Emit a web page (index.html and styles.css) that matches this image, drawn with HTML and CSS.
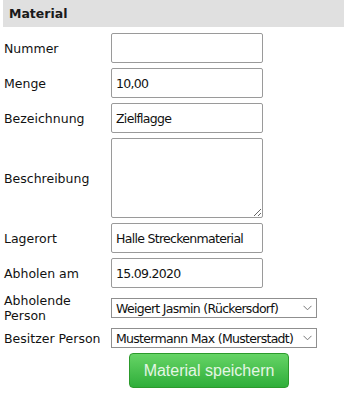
FILE: index.html
```html
<!DOCTYPE html>
<html>

<head>
    <link rel="stylesheet" href="styles.css">
</head>

<body>

    <div class="panel">
        <h2 class="panel-title">Material</h2>
        <form class="material-form" action="#" method="post">

            <label for="nummer">Nummer</label>
            <input type="text" id="nummer" name="nummer" value="">

            <label for="menge">Menge</label>
            <input type="text" id="menge" name="menge" value="10,00">

            <label for="bezeichnung">Bezeichnung</label>
            <input type="text" id="bezeichnung" name="bezeichnung" value="Zielflagge">

            <label for="beschreibung">Beschreibung</label>
            <textarea id="beschreibung" name="beschreibung"></textarea>

            <label for="lagerort" class="gap-top">Lagerort</label>
            <input type="text" id="lagerort" name="lagerort" class="gap-top" value="Halle Streckenmaterial">

            <label for="abholen">Abholen am</label>
            <input type="text" id="abholen" name="abholen" value="15.09.2020">

            <label for="abholer" class="two-lines">Abholende Person</label>
            <div class="select-wrap">
                <select id="abholer" name="abholer">
                    <option>Weigert Jasmin (Rückersdorf)</option>
                </select>
                <svg class="chevron" width="9" height="6" viewBox="0 0 9 6"><path d="M0.5 0.8 L4.5 4.8 L8.5 0.8" fill="none" stroke="#777" stroke-width="1"/></svg>
            </div>

            <label for="besitzer">Besitzer Person</label>
            <div class="select-wrap">
                <select id="besitzer" name="besitzer">
                    <option>Mustermann Max (Musterstadt)</option>
                </select>
                <svg class="chevron" width="9" height="6" viewBox="0 0 9 6"><path d="M0.5 0.8 L4.5 4.8 L8.5 0.8" fill="none" stroke="#777" stroke-width="1"/></svg>
            </div>

            <span></span>
            <button type="submit" class="btn-save">Material speichern</button>
        </form>
    </div>

</body>

</html>
```

FILE: styles.css
```css
body {
    margin: 0;
    font-family: "DejaVu Sans", sans-serif;
    font-size: 12.5px;
    color: #111;
    background-color: #fff;
}

.panel {
    margin-left: 3px;
}

.panel-title {
    margin: 0;
    height: 27px;
    line-height: 28px;
    padding-left: 6px;
    background-color: #e0e0e0;
    font-size: 12.5px;
    font-weight: bold;
    color: #1a1a1a;
}

.material-form {
    display: grid;
    grid-template-columns: 107px 1fr;
    row-gap: 5px;
    align-items: center;
    margin-top: 6px;
    padding-left: 1px;
}

label {
    line-height: 15px;
}

label.two-lines {
    width: 80px;
}

.gap-top {
    margin-top: 1px;
}

/* Eingabefelder etwas schmaler laufen lassen */
input[type="text"],
textarea,
select {
    font-family: "DejaVu Sans", sans-serif;
    font-size: 12.5px;
    letter-spacing: -0.7px;
    color: #111;
}

input[type="text"],
textarea {
    box-sizing: border-box;
    width: 152px;
    height: 30px;
    margin: 0;
    padding: 2px 4px;
    border: 1px solid #9a9a9a;
    border-radius: 2px;
}

textarea {
    height: 80px;
    resize: vertical;
}

.select-wrap {
    position: relative;
    width: 206px;
}

select {
    box-sizing: border-box;
    width: 206px;
    height: 20px;
    margin: 0;
    padding: 0 12px 0 4px;
    border: 1px solid #8f8f8f;
    border-radius: 0;
    background-color: #fff;
    -webkit-appearance: none;
    appearance: none;
}

.chevron {
    position: absolute;
    right: 5px;
    top: 7px;
    pointer-events: none;
}

.btn-save {
    width: 160px;
    height: 35px;
    margin-left: 18px;
    border: 1px solid #2c9a2c;
    border-radius: 4px;
    background: linear-gradient(#66d466, #2fae3a);
    color: #e4f6e4;
    font-family: "Liberation Sans", Arial, sans-serif;
    font-size: 16px;
    cursor: pointer;
}
```
